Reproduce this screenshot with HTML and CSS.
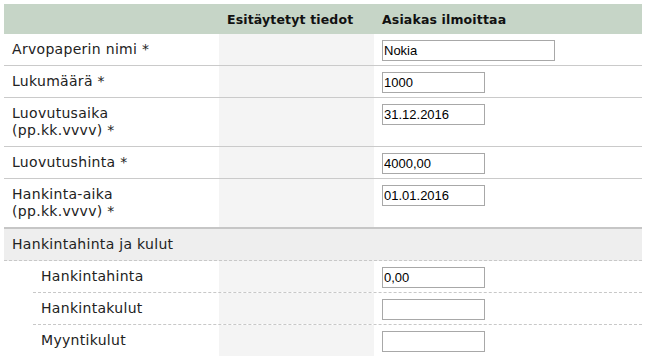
FILE: index.html
```html
<!DOCTYPE html>
<html lang="fi">
<head>
<meta charset="utf-8">
<title>Arvopaperin luovutus</title>
<link rel="stylesheet" href="styles.css">
</head>
<body>
<div class="form">
  <div class="row head">
    <div class="cell"></div>
    <div class="cell hcell">Esitäytetyt tiedot</div>
    <div class="cell hcell">Asiakas ilmoittaa</div>
  </div>
  <div class="row">
    <div class="cell label">Arvopaperin nimi *</div>
    <div class="cell pre"></div>
    <div class="cell field"><input class="inp wide" type="text" value="Nokia"></div>
  </div>
  <div class="row">
    <div class="cell label">Lukumäärä *</div>
    <div class="cell pre"></div>
    <div class="cell field"><input class="inp" type="text" value="1000"></div>
  </div>
  <div class="row">
    <div class="cell label">Luovutusaika<br>(pp.kk.vvvv) *</div>
    <div class="cell pre"></div>
    <div class="cell field"><input class="inp" type="text" value="31.12.2016"></div>
  </div>
  <div class="row">
    <div class="cell label">Luovutushinta *</div>
    <div class="cell pre"></div>
    <div class="cell field"><input class="inp" type="text" value="4000,00"></div>
  </div>
  <div class="row before-section">
    <div class="cell label">Hankinta-aika<br>(pp.kk.vvvv) *</div>
    <div class="cell pre"></div>
    <div class="cell field"><input class="inp" type="text" value="01.01.2016"></div>
  </div>
  <div class="row section">
    <div class="cell label">Hankintahinta ja kulut</div>
  </div>
  <div class="row sub">
    <div class="cell label">Hankintahinta</div>
    <div class="cell pre"></div>
    <div class="cell field"><input class="inp" type="text" value="0,00"></div>
  </div>
  <div class="row sub">
    <div class="cell label">Hankintakulut</div>
    <div class="cell pre"></div>
    <div class="cell field"><input class="inp" type="text" value=""></div>
  </div>
  <div class="row sub">
    <div class="cell label">Myyntikulut</div>
    <div class="cell pre"></div>
    <div class="cell field"><input class="inp" type="text" value=""></div>
  </div>
</div>
</body>
</html>
```

FILE: styles.css
```css
html, body {
  margin: 0;
  padding: 0;
  background: #ffffff;
}
body {
  padding: 4px;
  font-family: "DejaVu Sans", Verdana, sans-serif;
  font-size: 14px;
  color: #222222;
}
.form {
  width: 638px;
}
.row {
  display: grid;
  grid-template-columns: 215px 155px 1fr;
  border-bottom: 1px solid #cacaca;
}
.head {
  height: 30px;
  background: #c6d5c7;
  border-bottom: none;
  align-items: center;
}
.hcell {
  padding: 0 8px;
  font-weight: bold;
  font-size: 12.5px;
  letter-spacing: 0.15px;
  color: #111111;
}
.label {
  padding: 7px 8px;
  line-height: 17px;
  letter-spacing: 0.3px;
}
.pre {
  background: #f4f4f4;
}
.field {
  padding: 6px 8px 0;
}
.inp {
  display: block;
  box-sizing: border-box;
  width: 103px;
  height: 21px;
  margin: 0;
  padding: 0 1px;
  border: 1px solid #a8a8a8;
  border-radius: 0;
  font-family: "Liberation Sans", Arial, sans-serif;
  font-size: 13px;
  color: #000000;
  background: #ffffff;
  outline: none;
}
.inp.wide {
  width: 173px;
}
.before-section {
  border-bottom: 2px solid #c6c6c6;
}
.section {
  display: block;
  background: #eeeeee;
  border-bottom: 1px dashed #c8c8c8;
}
.sub {
  margin-left: 29px;
  grid-template-columns: 186px 155px 1fr;
  border-bottom: 1px dashed #c8c8c8;
}
```
